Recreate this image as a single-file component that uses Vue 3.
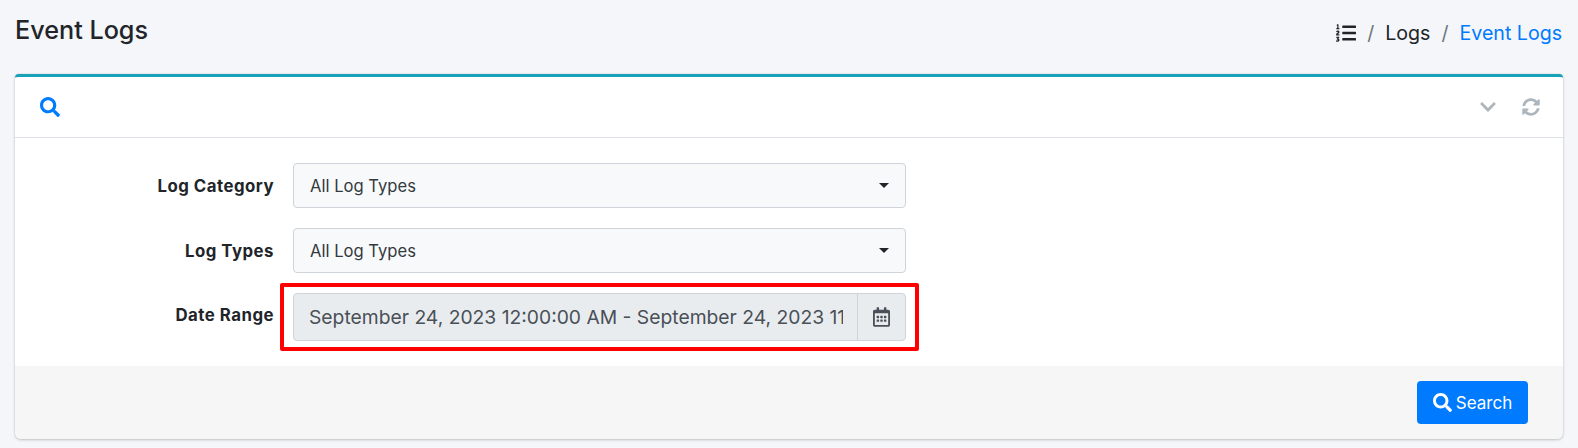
<script setup>
import { ref } from 'vue'

const category = ref('All Log Types')
const logType = ref('All Log Types')
const dateRange = ref('September 24, 2023 12:00:00 AM - September 24, 2023 11:59:59 PM')
</script>

<template>
  <div class="page">
    <div class="page-head">
      <h1 class="page-title">Event Logs</h1>
      <nav class="crumbs">
        <svg class="crumb-icon" viewBox="0 0 512 512"><path fill="currentColor" d="M61.77 401l17.5-20.15a19.92 19.92 0 0 0 5.07-14.19v-3.31C84.34 356 80.5 352 73 352H16a8 8 0 0 0-8 8v16a8 8 0 0 0 8 8h22.83a157.41 157.41 0 0 0-11 12.31l-5.61 7c-4 5.07-5.25 10.13-2.8 14.88l1.05 1.93c3 5.76 6.29 7.88 12.25 7.88h4.73c10.33 0 15.94 2.44 15.94 9.09 0 4.72-4.2 8.22-14.36 8.22a41.54 41.54 0 0 1-15.47-3.12c-6.49-3.88-11.74-3.5-15.6 3.12l-5.59 9.31c-3.72 6.13-3.19 11.72 2.63 15.94 7.71 4.69 20.38 9.44 37 9.44 34.16 0 48.5-22.75 48.5-44.12-.03-14.38-9.12-29.76-28.73-34.88zM496 224H176a16 16 0 0 0-16 16v32a16 16 0 0 0 16 16h320a16 16 0 0 0 16-16v-32a16 16 0 0 0-16-16zm0-160H176a16 16 0 0 0-16 16v32a16 16 0 0 0 16 16h320a16 16 0 0 0 16-16V80a16 16 0 0 0-16-16zm0 320H176a16 16 0 0 0-16 16v32a16 16 0 0 0 16 16h320a16 16 0 0 0 16-16v-32a16 16 0 0 0-16-16zM16 160h64a8 8 0 0 0 8-8v-16a8 8 0 0 0-8-8H64V40a8 8 0 0 0-8-8H32a8 8 0 0 0-7.14 4.42l-8 16A8 8 0 0 0 24 64h8v64H16a8 8 0 0 0-8 8v16a8 8 0 0 0 8 8zm-3.91 160H80a8 8 0 0 0 8-8v-16a8 8 0 0 0-8-8H41.32c3.29-10.29 48.34-18.68 48.34-56.44 0-29.06-25-39.56-44.47-39.56-21.36 0-33.8 10-40.46 18.75-4.37 5.59-3 10.84 2.8 15.37l8.58 6.88c5.61 4.56 11 2.47 16.12-2.44a13.44 13.44 0 0 1 9.46-3.84c3.33 0 9.28 1.56 9.28 8.75C51 248.19 0 257.31 0 304.59v4C0 316 5.08 320 12.09 320z"/></svg>
        <span class="crumb-sep">/</span>
        <span>Logs</span>
        <span class="crumb-sep">/</span>
        <span class="crumb-active">Event Logs</span>
      </nav>
    </div>

    <section class="card">
      <header class="card-head">
        <svg class="head-search" viewBox="0 0 512 512"><path fill="currentColor" d="M505 442.7L405.3 343c-4.5-4.5-10.6-7-17-7H372c27.6-35.3 44-79.7 44-128C416 93.1 322.9 0 208 0S0 93.1 0 208s93.1 208 208 208c48.3 0 92.7-16.4 128-44v16.3c0 6.4 2.5 12.5 7 17l99.7 99.7c9.4 9.4 24.6 9.4 33.9 0l28.3-28.3c9.4-9.4 9.4-24.6.1-34zM208 336c-70.7 0-128-57.2-128-128 0-70.7 57.2-128 128-128 70.7 0 128 57.2 128 128 0 70.7-57.2 128-128 128z"/></svg>
        <div class="head-tools">
          <svg class="tool-chevron" viewBox="0 0 448 512"><path fill="currentColor" d="M207.029 381.476L12.686 187.132c-9.373-9.373-9.373-24.569 0-33.941l22.667-22.667c9.357-9.357 24.522-9.375 33.901-.04L224 284.505l154.745-154.021c9.379-9.335 24.544-9.317 33.901.04l22.667 22.667c9.373 9.373 9.373 24.569 0 33.941L240.971 381.476c-9.373 9.372-24.569 9.372-33.942 0z"/></svg>
          <svg class="tool-sync" viewBox="0 0 512 512"><path fill="currentColor" d="M370.72 133.28C339.458 104.008 298.888 87.962 255.848 88c-77.458.068-144.328 53.178-162.791 126.85-1.344 5.363-6.122 9.15-11.651 9.15H24.103c-7.498 0-13.194-6.807-11.807-14.176C33.933 94.924 134.813 8 256 8c66.448 0 126.791 26.136 171.315 68.685L463.03 40.97C478.149 25.851 504 36.559 504 57.941V192c0 13.255-10.745 24-24 24H345.941c-21.382 0-32.09-25.851-16.971-40.971l41.75-41.749zM32 296h134.059c21.382 0 32.09 25.851 16.971 40.971l-41.75 41.75c31.262 29.273 71.835 45.319 114.876 45.28 77.418-.07 144.315-53.144 162.787-126.849 1.344-5.363 6.122-9.15 11.651-9.15h57.304c7.498 0 13.194 6.807 11.807 14.176C478.067 417.076 377.187 504 256 504c-66.448 0-126.791-26.136-171.315-68.685L48.97 471.03C33.851 486.149 8 475.441 8 454.059V320c0-13.255 10.745-24 24-24z"/></svg>
        </div>
      </header>

      <div class="card-body">
        <div class="form-row">
          <label class="form-label">Log Category</label>
          <div class="select-wrap">
            <select v-model="category" class="form-select">
              <option>All Log Types</option>
            </select>
          </div>
        </div>
        <div class="form-row">
          <label class="form-label">Log Types</label>
          <div class="select-wrap">
            <select v-model="logType" class="form-select">
              <option>All Log Types</option>
            </select>
          </div>
        </div>
        <div class="form-row">
          <label class="form-label date-label">Date Range</label>
          <div class="date-group">
            <input v-model="dateRange" class="date-input" type="text" readonly />
            <span class="date-addon">
              <svg class="calendar" viewBox="0 0 448 512"><path fill="currentColor" d="M148 288h-40c-6.6 0-12-5.4-12-12v-40c0-6.6 5.4-12 12-12h40c6.6 0 12 5.4 12 12v40c0 6.6-5.4 12-12 12zm108-12v-40c0-6.6-5.4-12-12-12h-40c-6.6 0-12 5.4-12 12v40c0 6.6 5.4 12 12 12h40c6.6 0 12-5.4 12-12zm96 0v-40c0-6.6-5.4-12-12-12h-40c-6.6 0-12 5.4-12 12v40c0 6.6 5.4 12 12 12h40c6.6 0 12-5.4 12-12zm-96 96v-40c0-6.6-5.4-12-12-12h-40c-6.6 0-12 5.4-12 12v40c0 6.6 5.4 12 12 12h40c6.6 0 12-5.4 12-12zm-96 0v-40c0-6.6-5.4-12-12-12h-40c-6.6 0-12 5.4-12 12v40c0 6.6 5.4 12 12 12h40c6.6 0 12-5.4 12-12zm192 0v-40c0-6.6-5.4-12-12-12h-40c-6.6 0-12 5.4-12 12v40c0 6.6 5.4 12 12 12h40c6.6 0 12-5.4 12-12zm96-260v352c0 26.5-21.5 48-48 48H48c-26.5 0-48-21.5-48-48V112c0-26.5 21.5-48 48-48h48V12c0-6.6 5.4-12 12-12h40c6.6 0 12 5.4 12 12v52h128V12c0-6.6 5.4-12 12-12h40c6.6 0 12 5.4 12 12v52h48c26.5 0 48 21.5 48 48zm-48 346V160H48v298c0 3.3 2.7 6 6 6h340c3.3 0 6-2.7 6-6z"/></svg>
            </span>
            <!-- red annotation box drawn over the screenshot -->
            <div class="highlight"></div>
          </div>
        </div>
      </div>

      <footer class="card-foot">
        <button class="search-btn" type="button">
          <svg class="btn-icon" viewBox="0 0 512 512"><path fill="currentColor" d="M505 442.7L405.3 343c-4.5-4.5-10.6-7-17-7H372c27.6-35.3 44-79.7 44-128C416 93.1 322.9 0 208 0S0 93.1 0 208s93.1 208 208 208c48.3 0 92.7-16.4 128-44v16.3c0 6.4 2.5 12.5 7 17l99.7 99.7c9.4 9.4 24.6 9.4 33.9 0l28.3-28.3c9.4-9.4 9.4-24.6.1-34zM208 336c-70.7 0-128-57.2-128-128 0-70.7 57.2-128 128-128 70.7 0 128 57.2 128 128 0 70.7-57.2 128-128 128z"/></svg>
          Search
        </button>
      </footer>
    </section>
  </div>
</template>

<style scoped>
.page {
  box-sizing: border-box;
  height: 448px;
  padding: 0 15px;
  background: #f4f6f9;
  color: #212529;
  font-family: Inter, "Noto Sans", sans-serif;
  overflow: hidden;
}

.page-head {
  display: flex;
  justify-content: space-between;
  height: 74px;
}

.page-title {
  margin: 15px 0 0;
  font-size: 25.2px;
  line-height: 30px;
  font-weight: 500;
}

.crumbs {
  display: flex;
  align-items: center;
  align-self: flex-start;
  margin: 20px 1px 0 0;
  height: 26px;
  font-size: 19.6px;
}

.crumb-icon {
  width: 20px;
  height: 20px;
}

.crumb-sep {
  margin: 0 11px;
  color: #6c757d;
}

.crumb-active {
  color: #007bff;
}

.card {
  display: flex;
  flex-direction: column;
  height: 365px;
  box-sizing: border-box;
  background: #fff;
  border-top: 3px solid #17a2b8;
  border-radius: 4px 4px 6px 6px;
  box-shadow: 0 0 1px rgba(0, 0, 0, .25), 0 1px 3px rgba(0, 0, 0, .2);
}

.card-head {
  display: flex;
  align-items: center;
  justify-content: space-between;
  height: 60px;
  padding: 0 23px 0 25px;
  border-bottom: 1px solid #dee2e6;
}

.head-search {
  width: 20px;
  height: 20px;
  color: #007bff;
}

.head-tools {
  display: flex;
  align-items: center;
  gap: 26px;
}

.tool-chevron {
  width: 16px;
  height: 18px;
  color: #adb5bd;
}

.tool-sync {
  width: 18px;
  height: 18px;
  color: #adb5bd;
}

.card-body {
  display: flex;
  flex-direction: column;
  gap: 20px;
  padding: 25px 0 25px;
}

.form-row {
  display: flex;
  align-items: center;
}

.form-label {
  width: 259px;
  text-align: right;
  font-size: 16.8px;
  font-weight: 700;
  letter-spacing: .5px;
}

.date-label {
  margin-bottom: 5px;
}

.select-wrap {
  position: relative;
  width: 613px;
  margin-left: 19px;
}

.select-wrap::after {
  content: '';
  position: absolute;
  top: 20px;
  right: 17px;
  border-top: 5px solid #212529;
  border-left: 5px solid transparent;
  border-right: 5px solid transparent;
}

.form-select {
  display: block;
  width: 100%;
  height: 45px;
  padding: 0 16px;
  box-sizing: border-box;
  appearance: none;
  background: #f8f9fa;
  border: 1px solid #ced4da;
  border-radius: 4px;
  color: #343a40;
  font: 400 16.6px Inter, "Noto Sans", sans-serif;
}

.date-group {
  position: relative;
  display: flex;
  width: 613px;
  height: 48px;
  margin-left: 19px;
  box-sizing: border-box;
  background: #e9ecef;
  border: 1px solid #ced4da;
  border-radius: 4px;
}

.date-input {
  flex: 1;
  min-width: 0;
  padding: 0 14px 0 15px;
  box-sizing: border-box;
  background: none;
  border: 0;
  outline: 0;
  color: #495057;
  font: 400 19.3px Inter, "Noto Sans", sans-serif;
}

.date-addon {
  display: flex;
  align-items: center;
  justify-content: center;
  width: 47px;
  border-left: 1px solid #ced4da;
}

.calendar {
  width: 17px;
  height: 20px;
  color: #495057;
}

.highlight {
  position: absolute;
  inset: -11px -14px -11px -14px;
  border: 4px solid #ff0000;
  border-radius: 2px;
  pointer-events: none;
}

.card-foot {
  flex: 1;
  display: flex;
  align-items: flex-start;
  justify-content: flex-end;
  padding: 15px 35px 0 0;
  background: #f6f6f7;
  border-radius: 0 0 6px 6px;
}

.search-btn {
  display: flex;
  align-items: center;
  justify-content: center;
  gap: 4px;
  width: 111px;
  height: 43px;
  background: #007bff;
  border: 0;
  border-radius: 4px;
  color: #fff;
  font: 400 17px Inter, "Noto Sans", sans-serif;
}

.btn-icon {
  width: 19px;
  height: 19px;
}
</style>
